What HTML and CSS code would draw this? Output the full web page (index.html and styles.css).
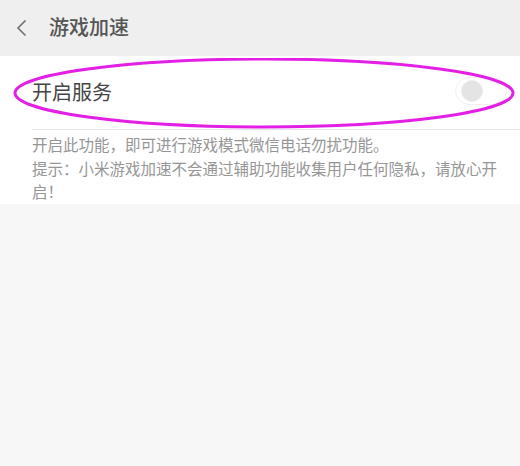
FILE: index.html
```html
<!DOCTYPE html>
<html lang="zh">
<head>
<meta charset="utf-8">
<link rel="stylesheet" href="styles.css">
</head>
<body>
<div class="page">
  <header class="topbar">
    <svg class="back" width="14" height="18" viewBox="0 0 14 18"><path d="M11.5 1.5 L4 9 L11.5 16.5" fill="none" stroke="#707070" stroke-width="1.6"/></svg>
    <span class="title">游戏加速</span>
  </header>
  <section class="card">
    <div class="row">
      <span class="row-label">开启服务</span>
      <span class="toggle"><span class="knob"></span></span>
    </div>
    <div class="desc">
      <p>开启此功能，即可进行游戏模式微信电话勿扰功能。</p>
      <p>提示：小米游戏加速不会通过辅助功能收集用户任何隐私，请放心开启！</p>
    </div>
  </section>
  <div class="rest"></div>
  <svg class="mark" width="520" height="140" viewBox="0 0 520 140"><ellipse cx="264" cy="35" rx="249" ry="34" fill="none" stroke="#e31fe6" stroke-width="3"/></svg>
</div>
</body>
</html>
```
FILE: styles.css
```css
html, body {
  margin: 0;
  padding: 0;
  background: #f7f7f7;
}
.page {
  position: relative;
  width: 520px;
  height: 466px;
  display: flex;
  flex-direction: column;
  font-family: "Noto Sans CJK SC", "Noto Sans", sans-serif;
  overflow: hidden;
}
.topbar {
  height: 56px;
  background: #efefef;
  display: flex;
  align-items: center;
  padding-left: 14px;
  box-sizing: border-box;
}
.back {
  margin-right: 21px;
}
.title {
  font-size: 20px;
  font-weight: 500;
  color: #555;
  line-height: 1;
  margin-top: -2px;
}
.card {
  background: #fff;
  padding-left: 32px;
}
.row {
  height: 73px;
  display: flex;
  align-items: center;
  justify-content: space-between;
  border-bottom: 1px solid #e6e6e6;
  padding-right: 13px;
}
.row-label {
  font-size: 20px;
  color: #444;
  margin-top: -2px;
}
.toggle {
  width: 52px;
  height: 28px;
  border: 1px solid #f0f0f0;
  border-radius: 15px;
  box-sizing: border-box;
  display: flex;
  align-items: center;
  padding-left: 5px;
  margin-top: -3px;
}
.knob {
  width: 22px;
  height: 22px;
  border-radius: 50%;
  background: #e4e4e4;
  border: 1px solid #ececec;
  box-sizing: border-box;
}
.desc {
  width: 476px;
  padding: 3px 0 0;
  color: #969696;
  font-size: 15.5px;
  line-height: 23.5px;
}
.desc p {
  margin: 0;
}
.rest {
  flex: 1;
  background: #f7f7f7;
}
.mark {
  position: absolute;
  left: 0;
  top: 58px;
}
```
